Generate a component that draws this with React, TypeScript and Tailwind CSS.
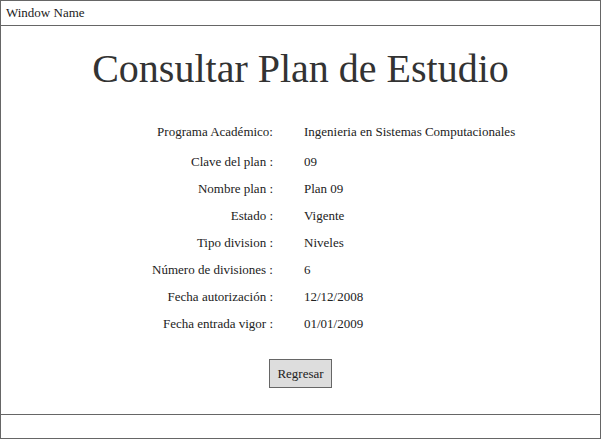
import React from 'react';

const rows: [string, string][] = [
  ['Programa Académico:', 'Ingenieria en Sistemas Computacionales'],
  ['Clave del plan :', '09'],
  ['Nombre plan :', 'Plan 09'],
  ['Estado :', 'Vigente'],
  ['Tipo division :', 'Niveles'],
  ['Número de divisiones :', '6'],
  ['Fecha autorización :', '12/12/2008'],
  ['Fecha entrada vigor :', '01/01/2009'],
];

const App: React.FC = () => {
  return (
    <div className="w-[601px] h-[439px] bg-white text-[#222] font-['Liberation_Serif',serif] border border-[#666] flex flex-col">
      <div className="h-[25px] border-b border-[#666] px-[5px] pt-[4px] text-[13px] leading-[15px]">Window Name</div>

      <div className="flex-1 flex flex-col items-center">
        <h1 className="mt-[18px] text-[40px] leading-[50px] text-[#333]">Consultar Plan de Estudio</h1>

        {/* detail rows */}
        <div className="mt-[30px] w-full flex flex-col text-[13px] leading-[15px]">
          {rows.map(([label, value], i) => (
            <div key={label} className={`flex ${i === 0 ? 'h-[30px]' : 'h-[27px]'}`}>
              <div className="w-[272px] text-right shrink-0">{label}</div>
              <div className="pl-[31px]">{value}</div>
            </div>
          ))}
        </div>

        <button className="mt-[16px] w-[63px] h-[29px] bg-[#dddddd] border border-[#666] text-[13px] text-[#222]">
          Regresar
        </button>
      </div>

      <div className="h-[24px] border-t border-[#666]" />
    </div>
  );
};

export default App;
